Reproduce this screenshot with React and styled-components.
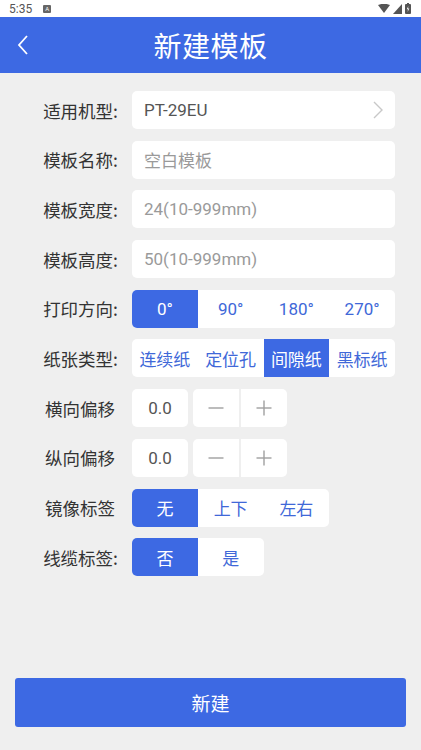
import React, { useState } from "react"
import styled, { createGlobalStyle } from "styled-components"

const BLUE = "#3d69e3"

const Global = createGlobalStyle`
  html, body { margin: 0; padding: 0; background: #efefef; }
  body { font-family: Roboto, "Noto Sans CJK SC", sans-serif; }
  * { box-sizing: border-box; }
`

function Minus() {
  return (
    <svg width="16" height="16" viewBox="0 0 16 16"><line x1="0.5" y1="8" x2="15.5" y2="8" stroke="#a0a0a0" strokeWidth="1.4" /></svg>
  )
}

function Plus() {
  return (
    <svg width="16" height="16" viewBox="0 0 16 16"><line x1="0.5" y1="8" x2="15.5" y2="8" stroke="#a0a0a0" strokeWidth="1.4" /><line x1="8" y1="0.5" x2="8" y2="15.5" stroke="#a0a0a0" strokeWidth="1.4" /></svg>
  )
}

export default function App() {
  const [dir, setDir] = useState(0)
  const [paper, setPaper] = useState(2)
  const [mirror, setMirror] = useState(0)
  const [cable, setCable] = useState(0)
  const [xOff, setXOff] = useState(0)
  const [yOff, setYOff] = useState(0)

  return (
    <>
      <Global />
      <Page>
        <StatusBar>
          <span className="time">5:35</span>
          <span className="note">A</span>
          <span className="right">
            <svg width="12" height="10" viewBox="0 0 12 10"><path d="M0 1 Q6 -1.5 12 1 L6 9 Z" fill="#555" /></svg>
            <svg width="9" height="10" viewBox="0 0 9 10"><path d="M9 0 L9 10 L0 10 Z" fill="#555" /></svg>
            <svg width="6" height="11" viewBox="0 0 6 11"><rect x="0" y="1" width="6" height="10" rx="1" fill="#555" /><rect x="2" y="0" width="2" height="1" fill="#555" /><path d="M3.3 3 L1.8 6.3 H3 L2.6 9 L4.3 5.5 H3.1 Z" fill="#fff" /></svg>
          </span>
        </StatusBar>
        <Header>
          <BackButton>
            <svg width="14" height="22" viewBox="0 0 14 22"><polyline points="11,2 3,11 11,20" fill="none" stroke="#fff" strokeWidth="1.8" /></svg>
          </BackButton>
          <Title>新建模板</Title>
        </Header>

        <Form>
          <Label>适用机型:</Label>
          <Field>
            <span>PT-29EU</span>
            <svg width="10" height="18" viewBox="0 0 10 18"><polyline points="1,1 9,9 1,17" fill="none" stroke="#c8c8c8" strokeWidth="1.4" /></svg>
          </Field>

          <Label>模板名称:</Label>
          <Field $placeholder>空白模板</Field>

          <Label>模板宽度:</Label>
          <Field $placeholder>24(10-999mm)</Field>

          <Label>模板高度:</Label>
          <Field $placeholder>50(10-999mm)</Field>

          <Label>打印方向:</Label>
          <Segmented $cols={4}>
            {["0°", "90°", "180°", "270°"].map((t, i) => (
              <Segment key={t} $active={dir === i} onClick={() => setDir(i)}>{t}</Segment>
            ))}
          </Segmented>

          <Label>纸张类型:</Label>
          <Segmented $cols={4}>
            {["连续纸", "定位孔", "间隙纸", "黑标纸"].map((t, i) => (
              <Segment key={t} $active={paper === i} onClick={() => setPaper(i)}>{t}</Segment>
            ))}
          </Segmented>

          <Label $plain>横向偏移</Label>
          <OffsetRow>
            <ValueBox>{xOff.toFixed(1)}</ValueBox>
            <Stepper>
              <StepButton onClick={() => setXOff(xOff - 0.1)}><Minus /></StepButton>
              <StepButton onClick={() => setXOff(xOff + 0.1)}><Plus /></StepButton>
            </Stepper>
          </OffsetRow>

          <Label $plain>纵向偏移</Label>
          <OffsetRow>
            <ValueBox>{yOff.toFixed(1)}</ValueBox>
            <Stepper>
              <StepButton onClick={() => setYOff(yOff - 0.1)}><Minus /></StepButton>
              <StepButton onClick={() => setYOff(yOff + 0.1)}><Plus /></StepButton>
            </Stepper>
          </OffsetRow>

          <Label $plain>镜像标签</Label>
          <Segmented $cols={3}>
            {["无", "上下", "左右"].map((t, i) => (
              <Segment key={t} $active={mirror === i} onClick={() => setMirror(i)}>{t}</Segment>
            ))}
          </Segmented>

          <Label>线缆标签:</Label>
          <Segmented $cols={2}>
            {["否", "是"].map((t, i) => (
              <Segment key={t} $active={cable === i} onClick={() => setCable(i)}>{t}</Segment>
            ))}
          </Segmented>
        </Form>

        <Footer>
          <CreateButton>新建</CreateButton>
        </Footer>
      </Page>
    </>
  )
}

const Page = styled.div`
  width: 421px;
  min-height: 750px;
  display: flex;
  flex-direction: column;
  background: #efefef;
`

const StatusBar = styled.div`
  height: 17px;
  background: #fff;
  display: flex;
  align-items: center;
  padding: 0 10px 0 9px;
  font-size: 12px;
  color: #555;
  .time{
    font-family: Roboto, sans-serif;
  }
  .note{
    margin-left: 11px;
    width: 8px;
    height: 8px;
    background: #666;
    color: #fff;
    font-size: 6px;
    line-height: 8px;
    text-align: center;
    border-radius: 1px;
  }
  .right{
    margin-left: auto;
    display: flex;
    align-items: center;
    gap: 3px;
  }
`

const Header = styled.div`
  height: 56px;
  background: ${BLUE};
  display: flex;
  align-items: center;
  justify-content: center;
  position: relative;
`

const BackButton = styled.div`
  position: absolute;
  left: 16px;
  top: 17px;
  display: flex;
`

const Title = styled.h1`
  margin: 0;
  font-size: 28px;
  font-weight: 400;
  color: #fff;
  font-family: "Noto Sans CJK SC", sans-serif;
  letter-spacing: 0.5px;
`

const Form = styled.div`
  display: grid;
  grid-template-columns: 118px 1fr;
  column-gap: 14px;
  row-gap: 11.7px;
  padding: 18px 26px 0 0;
`

const Label = styled.div`
  height: 38px;
  display: flex;
  align-items: center;
  justify-content: flex-end;
  padding-right: ${p => (p.$plain ? "3px" : "0")};
  font-size: 17.5px;
  color: #333;
  font-family: "Noto Sans CJK SC", sans-serif;
`

const Field = styled.div`
  height: 38px;
  background: #fff;
  border-radius: 5px;
  display: flex;
  align-items: center;
  justify-content: space-between;
  padding: 0 12px 0 12px;
  font-size: 17px;
  color: ${p => (p.$placeholder ? "#9a9a9a" : "#555")};
`

const Segmented = styled.div`
  height: 38px;
  width: ${p => p.$cols * 65.75}px;
  display: grid;
  grid-template-columns: repeat(${p => p.$cols}, 1fr);
  background: #fff;
  border-radius: 5px;
  overflow: hidden;
`

const Segment = styled.div`
  display: flex;
  align-items: center;
  justify-content: center;
  font-size: 17px;
  color: ${p => (p.$active ? "#fff" : "#4068d8")};
  background: ${p => (p.$active ? BLUE : "transparent")};
  cursor: pointer;
`

const OffsetRow = styled.div`
  height: 38px;
  display: flex;
  gap: 5px;
`

const ValueBox = styled.div`
  width: 56px;
  background: #fff;
  border-radius: 5px;
  display: flex;
  align-items: center;
  justify-content: center;
  font-size: 17px;
  color: #555;
`

const Stepper = styled.div`
  width: 94px;
  display: flex;
  gap: 2px;
`

const StepButton = styled.div`
  flex: 1;
  background: #fff;
  display: flex;
  align-items: center;
  justify-content: center;
  cursor: pointer;
  &:first-child{
    border-radius: 5px 0 0 5px;
  }
  &:last-child{
    border-radius: 0 5px 5px 0;
  }
`

const Footer = styled.div`
  margin-top: auto;
  padding: 0 15px 23px;
`

const CreateButton = styled.button`
  width: 100%;
  height: 49px;
  border: none;
  border-radius: 3px;
  background: ${BLUE};
  color: #fff;
  font-size: 19px;
  font-family: "Noto Sans CJK SC", sans-serif;
`
